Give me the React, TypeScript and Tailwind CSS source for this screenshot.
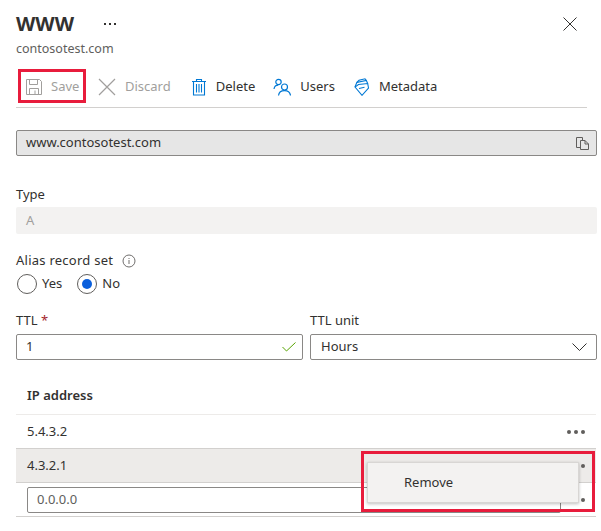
const font = "font-['Noto_Sans','Open_Sans',sans-serif]";

function SaveIcon() {
  return (
    <svg width="18" height="18" viewBox="0 0 18 18" fill="none" stroke="#a19f9d" strokeWidth="1">
      <path d="M1.5 1.5h13l2 2v13h-15z" />
      <path d="M4.5 1.5v5h8v-5M4.5 16.5v-6h9v6M10 12.5v4" />
    </svg>
  );
}

function DiscardIcon() {
  return (
    <svg width="18" height="18" viewBox="0 0 18 18" fill="none" stroke="#a19f9d" strokeWidth="1.2">
      <path d="M1 1l16 16M17 1L1 17" />
    </svg>
  );
}

function TrashIcon() {
  return (
    <svg width="16" height="18" viewBox="0 0 16 18" fill="none" stroke="#0078d4" strokeWidth="1.1">
      <path d="M1 3.5h14M5.5 3.5v-2h5v2M2.5 3.5v13.5h11V3.5M5.5 6v8.5M8 6v8.5M10.5 6v8.5" />
    </svg>
  );
}

function UsersIcon() {
  return (
    <svg width="18" height="18" viewBox="0 0 18 18" fill="none" stroke="#0078d4" strokeWidth="1.2">
      <circle cx="5.5" cy="4" r="2.7" />
      <path d="M1 11c.4-2.4 2-3.8 4.2-3.8" />
      <circle cx="11.5" cy="9" r="3" />
      <path d="M5.5 17.5c.4-3 2.800-4.800 6-4.800s5.600 1.800 6 4.800" />
    </svg>
  );
}

function TagsIcon() {
  return (
    <svg width="16" height="18" viewBox="0 0 16 18" fill="none" stroke="#0078d4" strokeWidth="1.1">
      <path d="M1 9L8 17.300l6.500-7.300-.8-4.500L4.500 6.500z" />
      <path d="M1 9l1.800-4.500 9.500-2 1.400 3" />
      <path d="M2.800 4.500L5 2.300 11 0.800l1.300 1.700" />
      <path d="M5 10.500l5.500-1.300" />
    </svg>
  );
}

function CopyIcon() {
  return (
    <svg width="13" height="13" viewBox="0 0 13 13" fill="none" stroke="#605e5c" strokeWidth="1">
      <path d="M4 10.500H0.500V0.500H6.500V3.500" />
      <path d="M4.500 3.500H9L12.500 7V12.500H4.500z" />
      <path d="M9 3.500V7H12.500" />
    </svg>
  );
}

function ToolbarItem({ icon, label, disabled, className }: { icon: React.ReactNode; label: string; disabled?: boolean; className?: string }) {
  return (
    <div className={`flex items-center mt-[3px] ${className ?? ""}`}>
      {icon}
      <span className={`text-[13px] ml-[9px] ${disabled ? "text-[#a19f9d]" : "text-[#323130]"}`}>{label}</span>
    </div>
  );
}

function Dots() {
  return (
    <div className="flex gap-[3px]">
      <span className="w-[4px] h-[4px] rounded-full bg-[#605e5c]" />
      <span className="w-[4px] h-[4px] rounded-full bg-[#605e5c]" />
      <span className="w-[4px] h-[4px] rounded-full bg-[#605e5c]" />
    </div>
  );
}

export default function App() {
  return (
    <div className={`${font} relative w-[601px] h-[531px] bg-white overflow-hidden text-[#323130] pl-4 pr-1`}>
      <div className="flex items-center justify-between h-[20px] mt-[14px] pr-[20px]">
        <div className="flex items-center">
          <h1 className="text-[20px] leading-[20px] font-bold text-[#323130] font-['Open_Sans',sans-serif]">WWW</h1>
          <div className="flex gap-[3px] ml-[30px]">
            <span className="w-[2px] h-[2px] bg-[#323130]" />
            <span className="w-[2px] h-[2px] bg-[#323130]" />
            <span className="w-[2px] h-[2px] bg-[#323130]" />
          </div>
        </div>
        <svg width="14" height="14" viewBox="0 0 14 14" fill="none" stroke="#323130" strokeWidth="1">
          <path d="M0.500 0.500l13 13M13.500 0.500l-13 13" />
        </svg>
      </div>
      <div className="text-[12.500px] leading-[18px] mt-[6px] text-[#605e5c]">contosotest.com</div>

      <div className="flex items-center h-[33px] mt-[11px]">
        <div className="flex items-center h-[34px] w-[68px] ml-[2px] border-[3px] border-[#e81c3c] pl-[4px] pt-[3px]">
          <SaveIcon />
          <span className="text-[13px] ml-[8px] text-[#a19f9d]">Save</span>
        </div>
        <ToolbarItem icon={<DiscardIcon />} label="Discard" disabled className="ml-[12px]" />
        <ToolbarItem icon={<TrashIcon />} label="Delete" className="ml-[20px]" />
        <ToolbarItem icon={<UsersIcon />} label="Users" className="ml-[18px]" />
        <ToolbarItem icon={<TagsIcon />} label="Metadata" className="ml-[19px]" />
      </div>
      <div className="h-px bg-[#d2d0ce] mt-[5px] w-[571px]" />

      <div className="flex items-center justify-between h-[26px] w-[581px] mt-[22px] bg-[#e6e6e6] border border-[#8a8886] rounded-[2px] pl-[9px] pr-[7px]">
        <span className="text-[13px] text-[#323130]">www.contosotest.com</span>
        <CopyIcon />
      </div>

      <div className="text-[13px] leading-[18px] mt-[29px]">Type</div>
      <div className="flex items-center h-[27px] w-[581px] mt-[4px] bg-[#f3f2f1] rounded-[2px] pl-[10px] text-[13px] text-[#a19f9d]">A</div>

      <div className="flex items-center mt-[18px] h-[18px]">
        <span className="text-[13px] tracking-[0.25px]">Alias record set</span>
        <svg className="ml-[9px]" width="14" height="14" viewBox="0 0 14 14" fill="none" stroke="#605e5c" strokeWidth="0.9">
          <circle cx="7" cy="7" r="6" />
          <path d="M7 6v4M7 4v1" />
        </svg>
      </div>
      <div className="flex items-center mt-[4px] h-[20px] ml-px">
        <span className="w-[20px] h-[20px] rounded-full border border-[#605e5c]" />
        <span className="text-[13px] ml-[5px]">Yes</span>
        <span className="flex items-center justify-center w-[20px] h-[20px] ml-[15px] rounded-full border border-[#605e5c]">
          <span className="w-[10px] h-[10px] rounded-full bg-[#0a5fdc]" />
        </span>
        <span className="text-[13px] ml-[5px]">No</span>
      </div>

      <div className="flex gap-[7px] w-[581px] mt-[17px]">
        <div className="flex-1">
          <div className="text-[13px] leading-[18px]">
            TTL <span className="text-[#a4262c]">*</span>
          </div>
          <div className="flex items-center justify-between h-[26px] mt-[5px] border border-[#8a8886] rounded-[2px] pl-[9px] pr-[6px] text-[13px]">
            <span>1</span>
            <svg width="14" height="10" viewBox="0 0 14 10" fill="none" stroke="#57a300" strokeWidth="1">
              <path d="M0.500 5l4 4L13.500 0.500" />
            </svg>
          </div>
        </div>
        <div className="flex-1">
          <div className="text-[13px] leading-[18px]">TTL unit</div>
          <div className="flex items-center justify-between h-[26px] mt-[5px] border border-[#8a8886] rounded-[2px] pl-[10px] pr-[9px] text-[13px]">
            <span>Hours</span>
            <svg width="15" height="9" viewBox="0 0 15 9" fill="none" stroke="#323130" strokeWidth="1">
              <path d="M0.500 0.500L7.500 7.500L14.500 0.500" />
            </svg>
          </div>
        </div>
      </div>

      <div className="w-[580px] mt-[26px]">
        <div className="flex items-center h-[20px] pl-[11px] text-[13px] font-semibold text-[#323130]">IP address</div>
        <div className="h-px bg-[#edebe9] mt-[8px]" />
        <div className="flex items-center justify-between h-[33px] pl-[11px] pr-[11px] text-[13px]">
          <span>5.4.3.2</span>
          <Dots />
        </div>
        <div className="flex items-center justify-between h-[35px] pl-[11px] pr-[11px] text-[13px] bg-[#edebe9] border-y border-[#d2d0ce]">
          <span>4.3.2.1</span>
          <Dots />
        </div>
        <div className="flex items-center justify-between h-[34px] pl-[11px] pr-[11px] border-b border-[#d2d0ce]">
          <div className="flex items-center h-[26px] w-[534px] border border-[#8a8886] rounded-[2px] pl-[9px] text-[13px] text-[#605e5c]">0.0.0.0</div>
          <Dots />
        </div>
      </div>

      {/* annotation and context menu sit above the table */}
      <div className="absolute left-[361px] top-[451px] w-[234px] h-[61px] border-[3px] border-[#e81c3c]">
        <div className="absolute left-[3px] top-[8px] w-[212px] h-[41px] flex items-center pl-[36px] bg-[#f3f2f1] border border-[#d8d6d4] shadow-[0_1px_3px_rgba(0,0,0,0.25)] text-[13px] text-[#323130]">
          Remove
        </div>
      </div>
    </div>
  );
}
